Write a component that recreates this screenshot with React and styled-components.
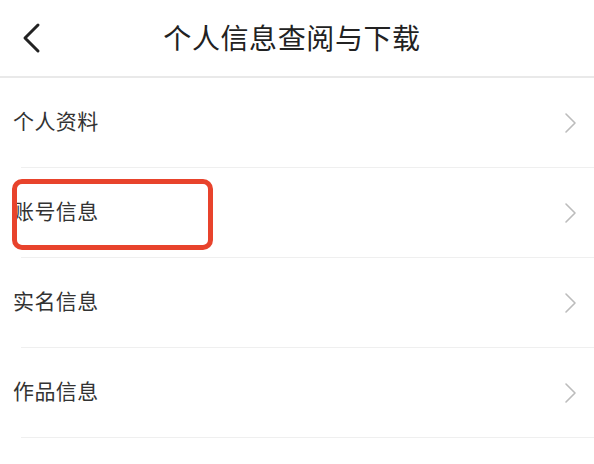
import React from "react";
import styled, { createGlobalStyle } from "styled-components";

const GlobalStyle = createGlobalStyle`
  html, body {
    margin: 0;
    padding: 0;
    background: #ffffff;
    font-family: "Noto Sans CJK SC", "Noto Sans", sans-serif;
  }
`;

const Page = styled.div`
  width: 594px;
  height: 464px;
  background: #fff;
  overflow: hidden;
`;

const Header = styled.header`
  height: 76px;
  border-bottom: 2px solid #e9e9e9;
  display: grid;
  grid-template-columns: 80px 1fr 80px;
  align-items: center;
`;

const BackButton = styled.button`
  border: none;
  background: none;
  padding: 0 0 0 20px;
  display: flex;
  align-items: center;
  height: 100%;
  cursor: pointer;
`;

const Title = styled.h1`
  margin: 0 0 3px;
  text-align: center;
  font-size: 28px;
  font-weight: 400;
  color: #222;
  letter-spacing: 0.6px;
  transform: translateX(-5px);
`;

const List = styled.div`
  display: flex;
  flex-direction: column;
`;

const Row = styled.div`
  position: relative;
  height: 89px;
  display: flex;
  align-items: center;
  justify-content: space-between;
  padding: 0 16px 0 13px;
  cursor: pointer;
`;

const Label = styled.span`
  font-size: 21px;
  color: #333;
  letter-spacing: 0.4px;
  margin-bottom: 5px;
`;

const Divider = styled.div`
  height: 1px;
  margin-left: 21px;
  background: #efefef;
`;

const Highlight = styled.div`
  position: absolute;
  left: 12px;
  top: 11px;
  width: 191px;
  height: 61px;
  border: 5px solid #e8432c;
  border-radius: 10px;
  pointer-events: none;
`;

const BackIcon = () => (
  <svg width="22" height="32" viewBox="0 0 22 32">
    <path d="M18 3 L5 16 L18 29" fill="none" stroke="#222" strokeWidth="3" strokeLinecap="round" strokeLinejoin="round" />
  </svg>
);

const Chevron = () => (
  <svg width="14" height="22" viewBox="0 0 14 22">
    <path d="M2 2 L11 11 L2 20" fill="none" stroke="#bcbcbc" strokeWidth="1.6" strokeLinecap="round" strokeLinejoin="round" />
  </svg>
);

const items = [
  { label: "个人资料" },
  { label: "账号信息", marked: true },
  { label: "实名信息" },
  { label: "作品信息" },
];

export default function App() {
  return (
    <Page>
      <GlobalStyle />
      <Header>
        <BackButton>
          <BackIcon />
        </BackButton>
        <Title>个人信息查阅与下载</Title>
        <div />
      </Header>
      <List>
        {items.map((item) => (
          <React.Fragment key={item.label}>
            <Row>
              <Label>{item.label}</Label>
              <Chevron />
              {item.marked && <Highlight />}
            </Row>
            <Divider />
          </React.Fragment>
        ))}
      </List>
    </Page>
  );
}
